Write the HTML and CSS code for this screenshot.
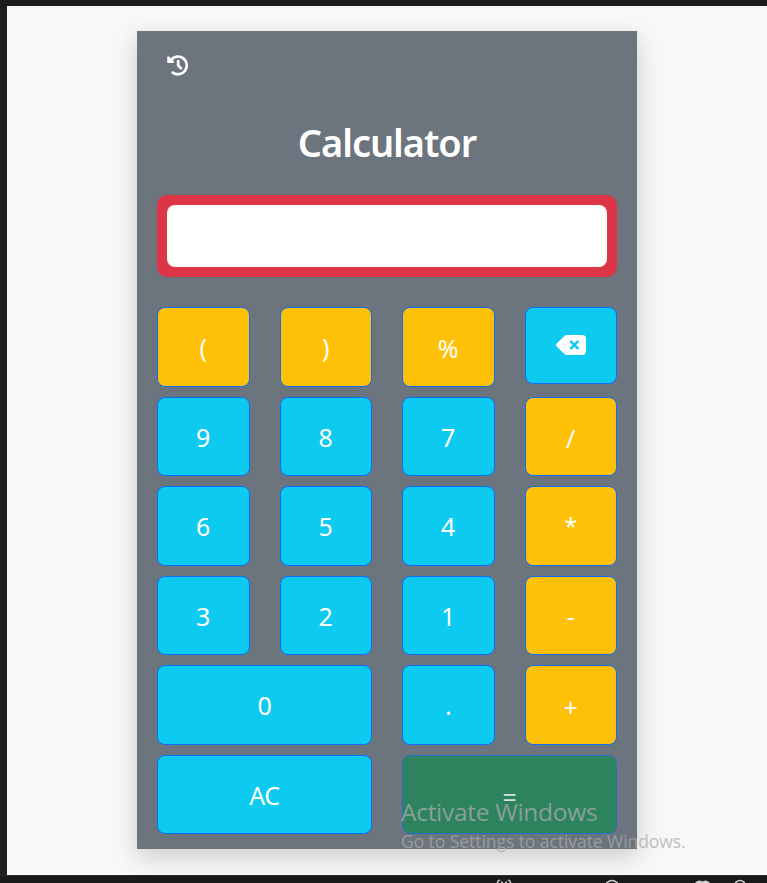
FILE: index.html
```html
<!DOCTYPE html>
<html lang="en">
<head>
<meta charset="utf-8">
<title>Calculator</title>
<link rel="stylesheet" href="styles.css">
</head>
<body>
<div class="frame">
  <main class="page">
    <section class="calculator">
      <svg class="history" viewBox="0 0 22 21" role="img" aria-label="History"><path class="arrow" d="M.3 1.500Q1.200.8 2 1.500L7 6.200Q7.400 7.800 6 7.900H1Q.2 7.900.2 7z"/><path d="M4 4.800A8.900 8.900 0 1 1 5.700 17.600M11.200 6V10.500L14 13.400"/></svg>
      <h1 class="title"><span>Calculator</span></h1>
      <div class="display"><input class="screen" type="text" aria-label="Result"></div>
      <div class="keys">
        <button class="key op paren">(</button>
        <button class="key op paren">)</button>
        <button class="key op percent">%</button>
        <button class="key erase" aria-label="Delete"><svg viewBox="0 64 576 384"><path fill-rule="evenodd" d="M576 128c0-35.300-28.700-64-64-64H205.300c-17 0-33.300 6.700-45.300 18.700L9.400 233.400c-6 6-9.400 14.100-9.400 22.600s3.400 16.600 9.400 22.600L160 429.300c12 12 28.300 18.700 45.300 18.700H512c35.300 0 64-28.700 64-64V128zM271 175c9.400-9.400 24.600-9.400 33.900 0l47 47 47-47c9.400-9.400 24.600-9.400 33.900 0s9.400 24.600 0 33.900l-47 47 47 47c9.400 9.400 9.400 24.600 0 33.900s-24.600 9.400-33.900 0l-47-47-47 47c-9.400 9.400-24.600 9.400-33.900 0s-9.400-24.600 0-33.900l47-47-47-47c-9.400-9.400-9.400-24.600 0-33.900z"/></svg></button>
        <button class="key">9</button>
        <button class="key">8</button>
        <button class="key">7</button>
        <button class="key op slash">/</button>
        <button class="key">6</button>
        <button class="key">5</button>
        <button class="key">4</button>
        <button class="key op star">*</button>
        <button class="key">3</button>
        <button class="key">2</button>
        <button class="key">1</button>
        <button class="key op">-</button>
        <button class="key wide">0</button>
        <button class="key">.</button>
        <button class="key op plus">+</button>
        <button class="key wide">AC</button>
        <button class="key wide equals">=</button>
      </div>
    </section>
  </main>
  <footer class="taskbar">
    <svg viewBox="0 0 767 8" fill="none" stroke="#cfcfcf" stroke-width="1.500"><path d="M500 5q-3 1-3 5M508 5q3 1 3 5M501 7l2 1M507 7l-2 1"/><circle cx="612" cy="12" r="6.500"/><path fill="#cfcfcf" stroke="none" d="M695 8q1-2 4-2.500 2 0 3.500 1 1.500-1 3.500-1 3 .5 4 2.500z"/><circle cx="740" cy="11" r="5.500"/></svg>
  </footer>
</div>
<aside class="watermark">
  <p class="activate">Activate Windows</p>
  <p class="settings">Go to Settings to activate Windows.</p>
</aside>
</body>
</html>
```

FILE: styles.css
```css
* { box-sizing: border-box; }

body {
  margin: 0;
  background: #1f1f1f;
  font-family: "Noto Sans", "Open Sans", sans-serif;
}

.frame {
  height: 883px;
  display: flex;
  flex-direction: column;
  border-top: 6px solid #1f1c1f;
  overflow: hidden;
}

.page {
  height: 869px;
  margin-left: 7px;
  padding: 25px 0 0 130px;
  background: #f8f8f8;
  overflow: hidden;
}

.calculator {
  width: 500px;
  height: 818px;
  padding: 24px 20px 15px;
  display: flex;
  flex-direction: column;
  background: #6c757d;
  box-shadow: 0 8px 24px rgba(0, 0, 0, .18);
}

.history {
  width: 22px;
  height: 21px;
  margin-left: 10px;
  fill: none;
  stroke: #fff;
  stroke-width: 2.800px;
  stroke-linecap: round;
  stroke-linejoin: round;
  overflow: visible;
}

.history .arrow { fill: #fff; stroke: none; }
.history path:last-child { stroke-width: 2.700px; }

.title {
  height: 48px;
  margin: 42px 0 29px;
  color: #fff;
  font-size: 38px;
  font-weight: 600;
  line-height: 48px;
  letter-spacing: -1.050px;
  text-align: center;
}

.display {
  height: 82px;
  padding: 10px;
  border-radius: 10px;
  background: #dc3545;
}

.screen {
  display: block;
  width: 100%;
  height: 62px;
  border: 0;
  border-radius: 8px;
  background: #fff;
}

.keys {
  margin-top: 30px;
  display: grid;
  grid-template-columns: repeat(4, 1fr);
  grid-auto-rows: 79.500px;
  gap: 10px 30px;
}

.key {
  padding: 1px 0 0;
  border: 1px solid #0d6efd;
  border-radius: 8px;
  background: #0dcaf0;
  color: #fff;
  font: 400 25px/38px "Noto Sans", "Open Sans", sans-serif;
}

.op { background: #ffc107; }
.percent { padding-top: 2px; }
.slash, .plus { padding-top: 4px; }
.star { padding-top: 0; font-size: 23px; }
.wide { grid-column: span 2; letter-spacing: -.500px; }

.equals {
  padding-top: 5px;
  background: #2e835f;
  border-color: #2470cf;
  color: #d5e2dc;
}

.erase {
  height: 77px;
  padding: 0;
  display: flex;
  align-items: center;
  justify-content: center;
}

.erase svg {
  width: 30px;
  height: 20px;
  margin-top: -2px;
  fill: #fff;
}

.taskbar {
  height: 8px;
  background: #191919;
  border-top: 1px solid #2a2a2a;
}

.taskbar svg { display: block; width: 767px; height: 8px; margin-top: -1px; }

.watermark {
  position: absolute;
  left: 401px;
  top: 795px;
  color: rgba(170, 170, 170, .75);
  white-space: nowrap;
  pointer-events: none;
}

.watermark p { margin: 0; }
.activate { font-family: "Open Sans", sans-serif; font-size: 24.500px; line-height: 34px; letter-spacing: -.300px; }
.settings { font-family: "Open Sans", sans-serif; font-size: 17.500px; line-height: 25px; letter-spacing: -.060px; }
```
